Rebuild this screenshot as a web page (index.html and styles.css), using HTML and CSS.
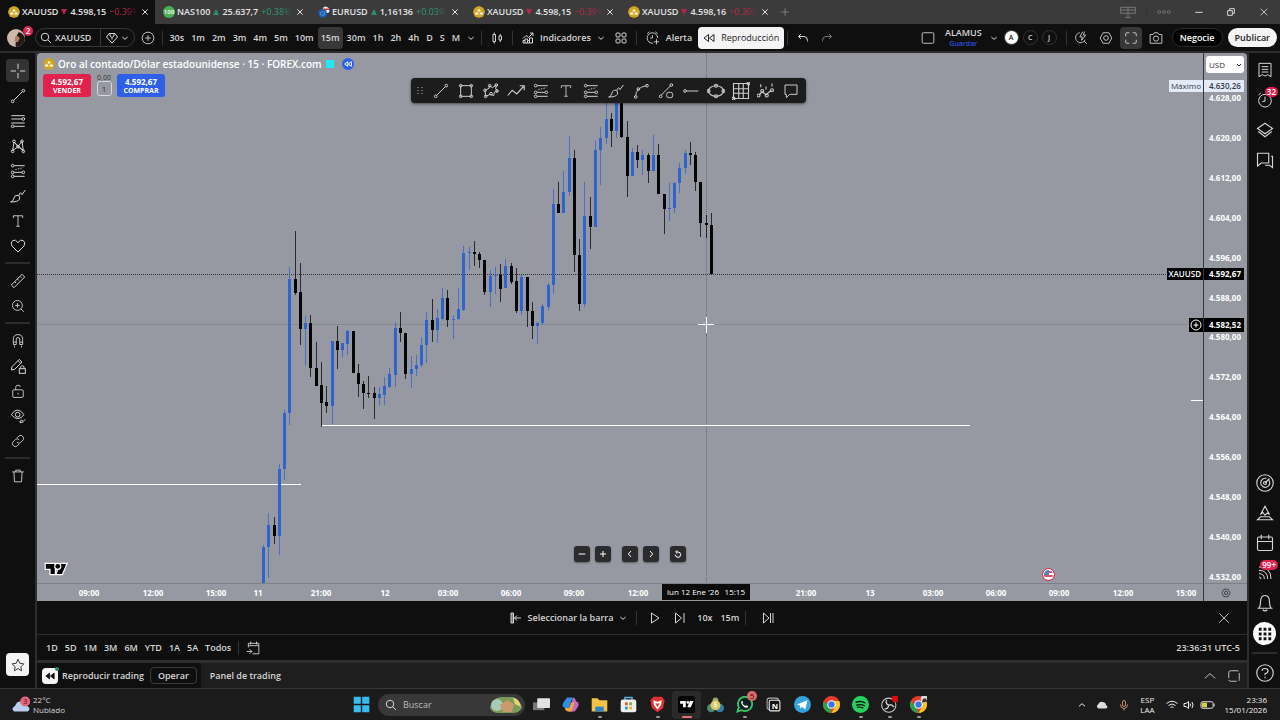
FILE: index.html
```html
<!DOCTYPE html>
<html lang="es">
<head>
    <meta charset="UTF-8">
    <meta name="viewport" content="width=device-width, initial-scale=1.0">
    <title>XAUUSD 4.598,15</title>
    <link rel="stylesheet" href="styles.css">
</head>
<body>
    <!-- BEGIN::icons -->
    <svg class="sprite" aria-hidden="true">
        <symbol id="i-gold" viewBox="0 0 24 24"><circle cx="12" cy="12" r="12" fill="#d2a520"/><path d="M9 11l1-4h4l1 4zM4 17l1-4h5l1 4zM13 17l1-4h5l1 4z" fill="#fff"/></symbol>
        <symbol id="i-close" viewBox="0 0 24 24"><path d="M4 4l16 16M20 4L4 20"/></symbol>
        <symbol id="i-down" viewBox="0 0 24 24"><path d="M4 9l8 7 8-7"/></symbol>
        <symbol id="i-up" viewBox="0 0 24 24"><path d="M3 16l9-8 9 8"/></symbol>
        <symbol id="i-plus" viewBox="0 0 24 24"><path d="M12 3v18M3 12h18"/></symbol>
        <symbol id="i-pluscircle" viewBox="0 0 24 24"><circle cx="12" cy="12" r="10"/><path d="M12 7v10M7 12h10"/></symbol>
        <symbol id="i-search" viewBox="0 0 24 24"><circle cx="10" cy="10" r="7.500"/><path d="M15.500 15.500L22 22"/></symbol>
        <symbol id="i-gem" viewBox="0 0 24 24"><path d="M6 3h12l5 7-11 12L1 10zM8 3v5l4 3 4-3V3M12 11v4"/></symbol>
        <symbol id="i-candles" viewBox="0 0 24 24"><path d="M4 5h5v14H4zM6.500 1v4M6.500 19v4M16 8h5v8h-5zM18.500 4v4M18.500 16v4"/></symbol>
        <symbol id="i-indicators" viewBox="0 0 24 24"><path d="M2 13l6-6 5 4 9-9M16 2h6v6M2 22v-5h4v-3h5v3h4v-5h6v10zM6 17v5M11 17v5M15 17v5"/></symbol>
        <symbol id="i-grid4" viewBox="0 0 24 24"><rect x="2" y="2" width="8" height="8" rx="2"/><rect x="14" y="2" width="8" height="8" rx="2"/><rect x="2" y="14" width="8" height="8" rx="2"/><rect x="14" y="14" width="8" height="8" rx="2"/></symbol>
        <symbol id="i-alarm" viewBox="0 0 24 24"><path d="M20 12a9 9 0 1 0-8 9M11 7v5H7M2 5l4-4M16 1l4 4M18 14v9M13.500 18.500h9"/></symbol>
        <symbol id="i-rewind" viewBox="0 0 24 24"><path d="M11 5v14l-9-7zM22 5v14l-9-7z"/></symbol>
        <symbol id="i-undo" viewBox="0 0 24 24"><path d="M8 4L3 9l5 5M3 9h11q7 0 7 8v2"/></symbol>
        <symbol id="i-redo" viewBox="0 0 24 24"><path d="M16 4l5 5-5 5M21 9H10q-7 0-7 8v2"/></symbol>
        <symbol id="i-rect" viewBox="0 0 24 24"><rect x="2" y="3" width="20" height="18" rx="2"/></symbol>
        <symbol id="i-quick" viewBox="0 0 24 24"><path d="M10 3a8.500 8.500 0 1 0 9 12M15 1l-5 9h4l-1 6 7-9h-4l2-6M17 17l5 5"/></symbol>
        <symbol id="i-hex" viewBox="0 0 24 24"><path d="M7 3h10l5 9-5 9H7l-5-9z"/><circle cx="12" cy="12" r="4"/></symbol>
        <symbol id="i-full" viewBox="0 0 24 24"><path d="M3 9V5q0-2 2-2h4M15 3h4q2 0 2 2v4M21 15v4q0 2-2 2h-4M9 21H5q-2 0-2-2v-4"/></symbol>
        <symbol id="i-camera" viewBox="0 0 24 24"><path d="M2 6h5l2-3h6l2 3h5v15H2z"/><circle cx="12" cy="13" r="4.500"/></symbol>
        <symbol id="i-cross" viewBox="0 0 24 24"><path d="M12 1v8M12 15v8M1 12h8M15 12h8M12 12h.1"/></symbol>
        <symbol id="i-line" viewBox="0 0 24 24"><circle cx="4" cy="20" r="2"/><circle cx="20" cy="4" r="2"/><path d="M5.500 18.500l13-13"/></symbol>
        <symbol id="i-fib" viewBox="0 0 24 24"><path d="M2 4h20M2 9h16M2 15h20M6 20h16"/><circle cx="20" cy="9" r="2"/><circle cx="4" cy="20" r="2"/></symbol>
        <symbol id="i-pattern" viewBox="0 0 24 24"><path d="M4 19L6 6l6 7 6-8 2 14-8-6zM6 6l14 13"/><circle cx="4" cy="20" r="2"/><circle cx="6" cy="5" r="2"/><circle cx="12" cy="13" r="2"/><circle cx="18" cy="5" r="2"/><circle cx="20" cy="20" r="2"/></symbol>
        <symbol id="i-position" viewBox="0 0 24 24"><path d="M6 4h16M6 14h12M6 20h16"/><path d="M8 10l12-3" stroke-dasharray="2 2"/><circle cx="4" cy="4" r="2"/><circle cx="4" cy="14" r="2"/><circle cx="20" cy="14" r="2"/><circle cx="4" cy="20" r="2"/></symbol>
        <symbol id="i-brush" viewBox="0 0 24 24"><path d="M1 21q4-1 5-6t6-4q4 2 2 6-2 4-13 4zM13 12q1-4 3-5l2 3 5-7"/></symbol>
        <symbol id="i-text" viewBox="0 0 24 24"><path d="M4 7V3h16v4M12 3v18M9 21h6"/></symbol>
        <symbol id="i-heart" viewBox="0 0 24 24"><path d="M12 21L3 12Q0 7 4 4t8 3q4-6 8-3t1 8z"/></symbol>
        <symbol id="i-ruler" viewBox="0 0 24 24"><path d="M2 18L18 2l4 4L6 22zM7 13l2 2M11 9l2 2M15 5l2 2"/></symbol>
        <symbol id="i-zoom" viewBox="0 0 24 24"><circle cx="11" cy="11" r="8.500"/><path d="M17 17l5 5M11 7v8M7 11h8"/></symbol>
        <symbol id="i-magnet" viewBox="0 0 24 24"><path d="M4 18V9q0-8 8-8t8 8v9h-5V9q0-3-3-3T9 9v9zM4 14h5M15 14h5M6 20v3M18 20v3"/></symbol>
        <symbol id="i-pencillock" viewBox="0 0 24 24"><path d="M2 18L3 13 14 2l4 4L7 17zM12 4l4 4"/><rect x="14" y="16" width="9" height="7"/><path d="M16 16v-3q2.500-3 5 0v3"/></symbol>
        <symbol id="i-lock" viewBox="0 0 24 24"><rect x="3" y="10" width="18" height="13" rx="2"/><path d="M8 10V6q0-4 4-4t4 3M12 15v3"/></symbol>
        <symbol id="i-eye" viewBox="0 0 24 24"><path d="M2 10q9-14 19 0-9 12-19 0z"/><circle cx="11.500" cy="10" r="3.500"/><path d="M14 21q2 0 3-3l3 2 3-3M15 22l5-1"/></symbol>
        <symbol id="i-link" viewBox="0 0 24 24"><path d="M10 7l4-4q3-2 6 1t1 6l-5 5q-3 2-6-1M14 17l-4 4q-3 2-6-1t-1-6l5-5q3-2 6 1"/></symbol>
        <symbol id="i-trash" viewBox="0 0 24 24"><path d="M2 5h20M8 5V2h8v3M5 5l1 17h12l1-17"/></symbol>
        <symbol id="i-star" viewBox="0 0 24 24"><path d="M12 2l3 7 7 1-5 5 1 7-6-4-6 4 1-7-5-5 7-1z"/></symbol>
        <symbol id="i-box" viewBox="0 0 24 24"><path d="M4 4h16v16H4z"/><circle cx="4" cy="4" r="2"/><circle cx="20" cy="4" r="2"/><circle cx="4" cy="20" r="2"/><circle cx="20" cy="20" r="2"/></symbol>
        <symbol id="i-poly" viewBox="0 0 24 24"><path d="M4 20l-1-9 6-3 1-4 4 3 6-4-1 6 3 3-5 2-1 5-5-2z"/><circle cx="4" cy="20" r="2"/><circle cx="3" cy="11" r="2"/><circle cx="10" cy="4" r="2"/><circle cx="20" cy="3" r="2"/><circle cx="21" cy="12" r="2"/><circle cx="12" cy="16" r="2"/></symbol>
        <symbol id="i-zigzag" viewBox="0 0 24 24"><path d="M1 18l6-7 6 5 9-10M17 5h6v6"/></symbol>
        <symbol id="i-curve" viewBox="0 0 24 24"><path d="M4 20Q4 7 20 4"/><circle cx="4" cy="21" r="2"/><circle cx="8" cy="9" r="2"/><circle cx="21" cy="4" r="2"/></symbol>
        <symbol id="i-lineshape" viewBox="0 0 24 24"><path d="M5 18L19 4"/><circle cx="4" cy="20" r="2"/><circle cx="20" cy="3" r="2"/><rect x="13" y="14" width="9" height="8" rx="3"/></symbol>
        <symbol id="i-hline" viewBox="0 0 24 24"><path d="M5 12h18"/><circle cx="3" cy="12" r="2"/></symbol>
        <symbol id="i-ellipse" viewBox="0 0 24 24"><ellipse cx="12" cy="12" rx="10" ry="7"/><circle cx="2" cy="12" r="2"/><circle cx="22" cy="12" r="2"/><circle cx="12" cy="5" r="2"/><circle cx="12" cy="19" r="2"/></symbol>
        <symbol id="i-table" viewBox="0 0 24 24"><path d="M2 2h20v20H2zM9 2v20M15 2v20M2 9h20M2 15h20"/><circle cx="22" cy="2" r="2"/><circle cx="2" cy="22" r="2"/></symbol>
        <symbol id="i-elliott" viewBox="0 0 24 24"><path d="M3 17l4-4 5 4 7-6M5 3v4M12 6v4M20 2v4"/><circle cx="2" cy="18" r="2"/><circle cx="7" cy="12" r="2"/><circle cx="13" cy="18" r="2"/><circle cx="20" cy="11" r="2"/></symbol>
        <symbol id="i-note" viewBox="0 0 24 24"><path d="M3 3h18v14H10l-5 5v-5H3z"/></symbol>
        <symbol id="i-watch" viewBox="0 0 24 24"><path d="M3 2h18v20l-5-3-4 2-4-2-5 3zM7 7h10M7 11h10M7 15h10"/></symbol>
        <symbol id="i-clock" viewBox="0 0 24 24"><circle cx="12" cy="13" r="9.500"/><path d="M12 7v7H8M2 5l4-4"/></symbol>
        <symbol id="i-layers" viewBox="0 0 24 24"><path d="M12 3l10 7-10 7-10-7zM3 14l9 7 9-7"/></symbol>
        <symbol id="i-chat" viewBox="0 0 24 24"><path d="M2 3h15v13H7l-5 4zM20 7h2v15l-4-3h-6"/></symbol>
        <symbol id="i-target" viewBox="0 0 24 24"><circle cx="12" cy="12" r="11"/><path d="M17 8a6 6 0 1 1-3-2M12 12l6-6"/><circle cx="12" cy="12" r="2"/></symbol>
        <symbol id="i-pyramid" viewBox="0 0 24 24"><path d="M6 14l6-11 6 11-3-2-3 3-3-4zM2 21l4-4h12l4 4z"/></symbol>
        <symbol id="i-calendar" viewBox="0 0 24 24"><rect x="2" y="4" width="20" height="18" rx="2"/><path d="M2 10h20M7 1v6M17 1v6"/></symbol>
        <symbol id="i-feed" viewBox="0 0 24 24"><path d="M3 13q8 0 8 8M3 8q13 0 13 13M3 3q18 0 18 18M3 18q3 0 3 3"/></symbol>
        <symbol id="i-bell" viewBox="0 0 24 24"><path d="M2 19h20M4 19q2-3 2-8 0-9 6-9t6 9q0 5 2 8M9 21q3 3 6 0"/></symbol>
        <symbol id="i-help" viewBox="0 0 24 24"><circle cx="12" cy="12" r="11"/><path d="M8 9q0-3 4-3t4 3-4 4v2M12 17v2"/></symbol>
        <symbol id="i-goto" viewBox="0 0 24 24"><path d="M4 11V4h18v18H11M4 8h18M8 1v5M18 1v5M1 18h9M6 14l4 4-4 4"/></symbol>
        <symbol id="i-selectbar" viewBox="0 0 24 24"><path d="M2 2h5v20H2z" fill="#777"/><path d="M22 12H9M14 7l-5 5 5 5"/></symbol>
        <symbol id="i-play" viewBox="0 0 24 24"><path d="M5 2l15 10L5 22z"/></symbol>
        <symbol id="i-step" viewBox="0 0 24 24"><path d="M3 2l12 10L3 22zM20 2v20"/></symbol>
        <symbol id="i-toend" viewBox="0 0 24 24"><path d="M3 2l11 10L3 22zM17 2v20M22 2v20"/></symbol>
        <symbol id="i-chrome" viewBox="0 0 24 24"><circle cx="12" cy="12" r="12" fill="#e33b2e"/><path d="M1 7l8 8 3 9A12 12 0 0 1 1 7z" fill="#2ba24c"/><path d="M12 7h11a12 12 0 0 1-11 17l5-9z" fill="#fcc31e"/><circle cx="12" cy="12" r="6" fill="#fff"/><circle cx="12" cy="12" r="4.500" fill="#3a76e8"/></symbol>
    </svg>
    <!-- END::icons -->

    <!-- BEGIN::tabs -->
    <header class="tabs">
        <div class="tab active">
            <svg class="coin"><use href="#i-gold"/></svg><b>XAUUSD</b><i class="fall"></i><span>4.598,15</span><span class="pct red">−0.39%</span>
            <button class="icon-btn" aria-label="Cerrar"><svg class="ico s8"><use href="#i-close"/></svg></button>
        </div>
        <div class="tab">
            <span class="coin nas">100</span><b>NAS100</b><i class="rise"></i><span>25.637,7</span><span class="pct green">+0.38%</span>
            <button class="icon-btn" aria-label="Cerrar"><svg class="ico s8"><use href="#i-close"/></svg></button>
        </div>
        <div class="tab">
            <svg class="coin" viewBox="0 0 24 24"><rect x="10" y="1" width="13" height="13" rx="5" fill="#eee"/><path d="M11 5h12v3H11z" fill="#d33"/><circle cx="9" cy="15" r="9" fill="#1d5fae"/><circle cx="9" cy="15" r="4" fill="none" stroke="#8cc8e8" stroke-width="2" stroke-dasharray="2 2"/></svg><b>EURUSD</b><i class="rise"></i><span>1,16136</span><span class="pct green">+0.03%</span>
            <button class="icon-btn" aria-label="Cerrar"><svg class="ico s8"><use href="#i-close"/></svg></button>
        </div>
        <div class="tab">
            <svg class="coin"><use href="#i-gold"/></svg><b>XAUUSD</b><i class="fall"></i><span>4.598,15</span><span class="pct red">−0.39%</span>
            <button class="icon-btn" aria-label="Cerrar"><svg class="ico s8"><use href="#i-close"/></svg></button>
        </div>
        <div class="tab">
            <svg class="coin"><use href="#i-gold"/></svg><b>XAUUSD</b><i class="fall"></i><span>4.598,16</span><span class="pct red">−0.39%</span>
            <button class="icon-btn" aria-label="Cerrar"><svg class="ico s8"><use href="#i-close"/></svg></button>
        </div>
        <button class="icon-btn new-tab" aria-label="Nueva pestaña"><svg class="ico s10"><use href="#i-plus"/></svg></button>
        <div class="window-buttons">
            <button class="icon-btn dim" aria-label="Diseño"><svg class="ico s16" viewBox="0 0 24 24"><path d="M1 5h22v9H1zM12 5v15M8 20h8M1 9h22"/></svg></button>
            <span class="sep"></span>
            <button class="icon-btn dim" aria-label="Más"><svg class="ico s14" viewBox="0 0 24 24"><circle cx="4" cy="12" r="2.500"/><circle cx="12" cy="12" r="2.500"/><circle cx="20" cy="12" r="2.500"/></svg></button>
            <button class="icon-btn" aria-label="Minimizar"><svg class="ico s8" viewBox="0 0 24 24"><path d="M1 13h22"/></svg></button>
            <button class="icon-btn" aria-label="Restaurar"><svg class="ico s8" viewBox="0 0 24 24"><path d="M2 8h14v14H2zM8 8V2h14v14h-6"/></svg></button>
            <button class="icon-btn" aria-label="Cerrar ventana"><svg class="ico s10"><use href="#i-close"/></svg></button>
        </div>
    </header>
    <!-- END::tabs -->

    <!-- BEGIN::toolbar -->
    <nav class="toolbar">
        <button class="avatar" aria-label="Perfil">
            <svg viewBox="0 0 24 24"><circle cx="12" cy="12" r="12" fill="#cbb9aa"/><path d="M12 24q-2-6 2-10-3-5 2-10 6 2 8 8-1 11-12 12z" fill="#241b18"/><path d="M11 10q5-2 6 3l-3 5-4-2z" fill="#b17f62"/></svg>
            <span class="badge">2</span>
        </button>
        <div class="search">
            <button><svg class="ico s12"><use href="#i-search"/></svg><b>XAUUSD</b></button>
            <button aria-label="Favoritos"><svg class="ico s12"><use href="#i-gem"/></svg><svg class="ico s8"><use href="#i-down"/></svg></button>
        </div>
        <button class="icon-btn" aria-label="Comparar"><svg class="ico s14"><use href="#i-pluscircle"/></svg></button>
        <span class="sep"></span>
        <div class="intervals">
            <button>30s</button><button>1m</button><button>2m</button><button>3m</button><button>4m</button><button>5m</button><button>10m</button><button class="selected">15m</button><button>30m</button><button>1h</button><button>2h</button><button>4h</button><button>D</button><button>S</button><button>M</button>
            <button aria-label="Intervalos"><svg class="ico s8"><use href="#i-down"/></svg></button>
        </div>
        <span class="sep"></span>
        <button class="tool-btn" aria-label="Velas"><svg class="ico s12"><use href="#i-candles"/></svg></button>
        <span class="sep"></span>
        <button class="tool-btn"><svg class="ico s12"><use href="#i-indicators"/></svg>Indicadores</button>
        <button class="icon-btn" aria-label="Favoritos de indicadores"><svg class="ico s8"><use href="#i-down"/></svg></button>
        <button class="tool-btn" aria-label="Plantillas"><svg class="ico s12"><use href="#i-grid4"/></svg></button>
        <span class="sep"></span>
        <button class="tool-btn"><svg class="ico s14"><use href="#i-alarm"/></svg>Alerta</button>
        <button class="replay-btn"><svg class="ico s12"><use href="#i-rewind"/></svg>Reproducción</button>
        <span class="sep"></span>
        <button class="tool-btn" aria-label="Deshacer"><svg class="ico s12"><use href="#i-undo"/></svg></button>
        <button class="tool-btn dim" aria-label="Rehacer"><svg class="ico s12"><use href="#i-redo"/></svg></button>
        <div class="toolbar-right">
            <svg class="ico s14"><use href="#i-rect"/></svg>
            <div class="layout-name"><button>ALAMUS</button><a href="#">Guardar</a></div>
            <button class="icon-btn" aria-label="Diseños"><svg class="ico s8"><use href="#i-down"/></svg></button>
            <div class="letters"><button class="on">A</button><button>C</button><button>J</button></div>
            <span class="sep"></span>
            <button class="tool-ico" aria-label="Búsqueda rápida"><svg class="ico s14"><use href="#i-quick"/></svg></button>
            <button class="tool-ico" aria-label="Ajustes"><svg class="ico s14"><use href="#i-hex"/></svg></button>
            <button class="tool-ico selected" aria-label="Pantalla completa"><svg class="ico s14"><use href="#i-full"/></svg></button>
            <button class="tool-ico" aria-label="Instantánea"><svg class="ico s14"><use href="#i-camera"/></svg></button>
            <button class="pill dark">Negocie</button>
            <button class="pill">Publicar</button>
        </div>
    </nav>
    <!-- END::toolbar -->

    <main class="workspace">
        <!-- BEGIN::left-rail -->
        <aside class="left-rail">
            <button class="selected" aria-label="Cruz"><svg class="ico s16"><use href="#i-cross"/></svg></button>
            <button aria-label="Línea"><svg class="ico s16"><use href="#i-line"/></svg></button>
            <button aria-label="Fibonacci"><svg class="ico s16"><use href="#i-fib"/></svg></button>
            <button aria-label="Patrones"><svg class="ico s16"><use href="#i-pattern"/></svg></button>
            <button aria-label="Posición"><svg class="ico s16"><use href="#i-position"/></svg></button>
            <button aria-label="Pincel"><svg class="ico s16"><use href="#i-brush"/></svg></button>
            <button aria-label="Texto"><svg class="ico s14"><use href="#i-text"/></svg></button>
            <button aria-label="Favoritos"><svg class="ico s16"><use href="#i-heart"/></svg></button>
            <hr>
            <button aria-label="Medir"><svg class="ico s16"><use href="#i-ruler"/></svg></button>
            <button aria-label="Acercar"><svg class="ico s14"><use href="#i-zoom"/></svg></button>
            <hr>
            <button aria-label="Imán"><svg class="ico s14"><use href="#i-magnet"/></svg></button>
            <button aria-label="Modo dibujo"><svg class="ico s16"><use href="#i-pencillock"/></svg></button>
            <button aria-label="Bloquear"><svg class="ico s14"><use href="#i-lock"/></svg></button>
            <button aria-label="Ocultar"><svg class="ico s16"><use href="#i-eye"/></svg></button>
            <button aria-label="Vincular"><svg class="ico s14"><use href="#i-link"/></svg></button>
            <hr>
            <button aria-label="Eliminar"><svg class="ico s14"><use href="#i-trash"/></svg></button>
            <button class="star" aria-label="Barra de favoritos"><svg class="ico s14"><use href="#i-star"/></svg></button>
        </aside>
        <!-- END::left-rail -->

        <section class="center">
            <!-- BEGIN::chart -->
            <div class="chart">
                <div class="plot">
                    <svg id="candles" class="canvas" role="img" aria-label="XAUUSD 15 minutos"></svg>
                    <div class="legend">
                        <h1><svg class="coin"><use href="#i-gold"/></svg>Oro al contado/Dólar estadounidense · 15 · FOREX.com<i class="flag"></i><span class="back"><svg class="ico s8"><use href="#i-rewind"/></svg></span></h1>
                        <div class="orders">
                            <button class="sell">4.592,67<span>VENDER</span></button>
                            <div class="spread"><small>0,00</small><button>1</button></div>
                            <button class="buy">4.592,67<span>COMPRAR</span></button>
                        </div>
                    </div>
                    <div class="draw-bar">
                        <span class="grip"></span>
                        <button aria-label="Línea"><svg class="ico s16"><use href="#i-line"/></svg></button>
                        <button aria-label="Rectángulo"><svg class="ico s16"><use href="#i-box"/></svg></button>
                        <button aria-label="Trazado"><svg class="ico s16"><use href="#i-poly"/></svg></button>
                        <button aria-label="Flecha"><svg class="ico s18"><use href="#i-zigzag"/></svg></button>
                        <button aria-label="Posición larga"><svg class="ico s16"><use href="#i-position"/></svg></button>
                        <button aria-label="Texto"><svg class="ico s14"><use href="#i-text"/></svg></button>
                        <button aria-label="Posición corta"><svg class="ico s16"><use href="#i-position"/></svg></button>
                        <button aria-label="Pincel"><svg class="ico s16"><use href="#i-brush"/></svg></button>
                        <button aria-label="Curva"><svg class="ico s16"><use href="#i-curve"/></svg></button>
                        <button aria-label="Información"><svg class="ico s16"><use href="#i-lineshape"/></svg></button>
                        <button aria-label="Rayo horizontal"><svg class="ico s16"><use href="#i-hline"/></svg></button>
                        <button aria-label="Elipse"><svg class="ico s18"><use href="#i-ellipse"/></svg></button>
                        <button aria-label="Tabla"><svg class="ico s18"><use href="#i-table"/></svg></button>
                        <button aria-label="Ondas"><svg class="ico s18"><use href="#i-elliott"/></svg></button>
                        <button aria-label="Comentario"><svg class="ico s16"><use href="#i-note"/></svg></button>
                    </div>
                    <svg class="tv-logo" viewBox="-2 -2 40 23"><path d="M1 1h15v17H9V9H1zM26 1h9l-7 17h-9z"/><circle cx="21" cy="5" r="4"/></svg>
                    <div class="nav-bar">
                        <button aria-label="Alejar"><svg class="ico s8" viewBox="0 0 24 24"><path d="M2 12h20"/></svg></button>
                        <button aria-label="Acercar"><svg class="ico s8"><use href="#i-plus"/></svg></button>
                        <button class="apart" aria-label="Izquierda"><svg class="ico s8" viewBox="0 0 24 24"><path d="M15 3l-8 9 8 9"/></svg></button>
                        <button aria-label="Derecha"><svg class="ico s8" viewBox="0 0 24 24"><path d="M9 3l8 9-8 9"/></svg></button>
                        <button class="apart" aria-label="Restablecer"><svg class="ico s8" viewBox="0 0 24 24"><path d="M6 6h6a8 8 0 1 1-8 8M10 1L5 6l5 5"/></svg></button>
                    </div>
                    <span class="event" aria-label="Evento EE. UU."></span>
                    <span class="tag max">Máximo</span>
                    <span class="tag last">XAUUSD</span>
                    <span class="tag cursor"><svg class="ico s12"><use href="#i-pluscircle"/></svg></span>
                </div>
                <div class="price-axis">
                    <select class="currency" aria-label="Divisa"><option>USD</option></select>
                    <span>4.628,00</span><span>4.620,00</span><span>4.612,00</span><span>4.604,00</span><span>4.596,00</span><span>4.588,00</span><span>4.580,00</span><span>4.572,00</span><span>4.564,00</span><span>4.556,00</span><span>4.548,00</span><span>4.540,00</span><span>4.532,00</span>
                    <span class="tag max">4.630,26</span>
                    <span class="tag last">4.592,67</span>
                    <span class="tag cursor">4.582,52</span>
                </div>
                <div class="time-axis">
                    <svg id="times" class="canvas"></svg>
                    <span class="time-tag"><span>lun 12 Ene '26</span><span>15:15</span></span>
                </div>
                <button class="axis-settings" aria-label="Ajustes de escala"><svg class="ico s10"><use href="#i-hex"/></svg></button>
            </div>
            <!-- END::chart -->
            <!-- BEGIN::replay-bar -->
            <div class="replay-bar">
                <div class="replay-controls">
                    <button class="tool-btn"><svg class="ico s12"><use href="#i-selectbar"/></svg>Seleccionar la barra</button>
                    <button class="icon-btn" aria-label="Opciones"><svg class="ico s8"><use href="#i-down"/></svg></button>
                    <span class="sep"></span>
                    <button class="step-btn" aria-label="Reproducir"><svg class="ico s12"><use href="#i-play"/></svg></button>
                    <button class="step-btn" aria-label="Avanzar"><svg class="ico s12"><use href="#i-step"/></svg></button>
                    <button class="step-btn">10x</button>
                    <button class="step-btn">15m</button>
                    <span class="sep"></span>
                    <button class="step-btn end" aria-label="Tiempo real"><svg class="ico s12"><use href="#i-toend"/></svg></button>
                </div>
                <button class="icon-btn close" aria-label="Cerrar reproducción"><svg class="ico s14"><use href="#i-close"/></svg></button>
            </div>
            <!-- END::replay-bar -->
            <div class="range-bar">
                <button>1D</button><button>5D</button><button>1M</button><button>3M</button><button>6M</button><button>YTD</button><button>1A</button><button>5A</button><button>Todos</button>
                <span class="sep"></span>
                <button aria-label="Ir a"><svg class="ico s14"><use href="#i-goto"/></svg></button>
                <time>23:36:31 UTC-5</time>
            </div>
            <div class="panel-bar">
                <div class="panel-tab">
                    <span class="replay-logo"><svg class="ico s10"><use href="#i-rewind"/></svg></span>
                    Reproducir trading
                    <button>Operar</button>
                </div>
                <button class="panel-link">Panel de trading</button>
                <button class="icon-btn" aria-label="Expandir"><svg class="ico s14"><use href="#i-up"/></svg></button>
                <button class="icon-btn" aria-label="Maximizar"><svg class="ico s14" viewBox="0 0 24 24"><rect x="3" y="3" width="18" height="18" rx="3" stroke-dasharray="14 3"/></svg></button>
            </div>
        </section>

        <!-- BEGIN::right-rail -->
        <aside class="right-rail">
            <button aria-label="Lista"><svg class="ico s16"><use href="#i-watch"/></svg></button>
            <button aria-label="Alertas"><svg class="ico s16"><use href="#i-clock"/></svg><span class="badge">32</span></button>
            <button aria-label="Capas"><svg class="ico s18"><use href="#i-layers"/></svg></button>
            <button aria-label="Chats"><svg class="ico s18"><use href="#i-chat"/></svg></button>
            <button class="lower" aria-label="Filtros"><svg class="ico s18"><use href="#i-target"/></svg></button>
            <button aria-label="Pine"><svg class="ico s18"><use href="#i-pyramid"/></svg></button>
            <button aria-label="Calendario"><svg class="ico s18"><use href="#i-calendar"/></svg></button>
            <button aria-label="Noticias"><svg class="ico s16"><use href="#i-feed"/></svg><span class="badge">99+</span></button>
            <button aria-label="Notificaciones"><svg class="ico s18"><use href="#i-bell"/></svg></button>
            <button aria-label="Productos"><svg class="apps" viewBox="0 0 24 24"><circle cx="12" cy="12" r="12"/><path d="M6 6h3v3H6zM11 6h3v3h-3zM16 6h3v3h-3zM6 11h3v3H6zM11 11h3v3h-3zM16 11h3v3h-3zM6 16h3v3H6zM11 16h3v3h-3zM16 16h3v3h-3z"/></svg></button>
            <hr>
            <button aria-label="Ayuda"><svg class="ico s18"><use href="#i-help"/></svg></button>
        </aside>
        <!-- END::right-rail -->
    </main>

    <!-- BEGIN::taskbar -->
    <footer class="taskbar">
        <div class="weather">
            <svg viewBox="0 0 24 20"><path d="M4 19q-5-3 1-7 2-6 8-5 5 1 6 5 6 3 1 7z" fill="#b9cdf0"/><circle cx="17" cy="7" r="6" fill="#e5677c"/><text x="17" y="10" font-size="9" text-anchor="middle" fill="#3a1119">3</text></svg>
            <p>22°C<br>Nublado</p>
        </div>
        <div class="apps-row">
            <button class="app" aria-label="Inicio"><svg viewBox="0 0 24 24"><path d="M1 1h10v10H1zM13 1h10v10H13zM1 13h10v10H1zM13 13h10v10H13z" fill="#35bdf0"/></svg></button>
            <label class="task-search"><svg class="ico s12"><use href="#i-search"/></svg><input type="text" placeholder="Buscar"><svg class="rocks" viewBox="0 0 34 17"><path d="M1 12q2-10 11-11h12q8 4 9 11-3 5-9 5H10q-7 0-9-5z" fill="#7d9b58"/><circle cx="8" cy="9" r="6" fill="#a8cbb6"/><path d="M11 9l7-5 7 4-2 8h-9z" fill="#c79b6a"/><path d="M24 2q6 0 8 9l-6-3z" fill="#e3d27c"/></svg></label>
            <button class="app" aria-label="Vista de tareas"><svg viewBox="0 0 24 24"><rect x="0" y="9" width="16" height="11" fill="#777"/><rect x="6" y="3" width="18" height="14" rx="1" fill="#e2e2e2"/></svg></button>
            <button class="app" aria-label="Copilot"><svg viewBox="0 0 24 24"><path d="M7 2h8l-5 15H4q-5-2-2-8z" fill="#2f8de4"/><path d="M15 2q4 0 5 6h2q3 3 0 8l-4 6H9l5-13z" fill="#c566c9"/><path d="M4 17h6l3-8 5-1-4 14H9q-4 0-5-5z" fill="#f1a33c"/></svg></button>
            <button class="app open" aria-label="Explorador"><svg viewBox="0 0 24 24"><path d="M1 3h8l3 3h11v16H1z" fill="#f3c443"/><path d="M6 15h12v7H6z" fill="#2f83c9"/></svg></button>
            <button class="app" aria-label="Tienda"><svg viewBox="0 0 24 24"><path d="M7 6V2h10v4" fill="none" stroke="#55b4e8" stroke-width="2"/><rect x="1" y="5" width="22" height="18" rx="3" fill="#eee"/><path d="M7 9h4v4H7z" fill="#e8542c"/><path d="M13 9h4v4h-4z" fill="#75b82b"/><path d="M7 15h4v4H7z" fill="#2aa0da"/><path d="M13 15h4v4h-4z" fill="#f3b51b"/></svg></button>
            <button class="app open" aria-label="Brave"><svg viewBox="0 0 24 24"><path d="M6 1h12l4 5-2 11-8 6-8-6L2 6z" fill="#dd3230"/><path d="M6 6l6 2 6-2-1 7-5 6-5-6zM9 11h6" fill="#fff"/><path d="M9 10l3 1 3-1-3 6z" fill="#dd3230"/></svg></button>
            <button class="app current" aria-label="TradingView"><svg viewBox="0 0 24 24"><rect width="24" height="24" rx="4" fill="#050505"/><path d="M3 7h8v9H7v-5H3zM17 7h5l-4 9h-5z" fill="#fff"/><circle cx="14" cy="9" r="2" fill="#fff"/></svg></button>
            <button class="app" aria-label="Dinero"><svg viewBox="0 0 24 24"><circle cx="6" cy="17" r="6" fill="#4b8a76"/><circle cx="18" cy="17" r="6" fill="#347fa8"/><circle cx="12" cy="6" r="4" fill="#94a960"/><circle cx="12" cy="13" r="7" fill="#d9c65d"/><text x="12" y="17" font-size="11" text-anchor="middle" fill="#fff">$</text></svg></button>
            <button class="app open" aria-label="WhatsApp"><svg viewBox="0 0 24 24"><path d="M2 22l2-6a10 10 0 1 1 4 4z" fill="#122" stroke="#35c765" stroke-width="2.500"/><path d="M8 7q-2 3 2 7t7 2v-2l-3-1-1 1q-3-1-4-4l1-1-1-2z" fill="#fff"/></svg><span class="badge">5</span></button>
            <button class="app" aria-label="Notion"><svg viewBox="0 0 24 24"><rect x="3" y="3" width="16" height="16" rx="3" fill="none" stroke="#aaa" stroke-width="1.500"/><rect x="6" y="6" width="15" height="15" rx="2" fill="#151515" stroke="#eee" stroke-width="1.500"/><text x="14" y="18" font-size="11" font-weight="700" text-anchor="middle" fill="#fff">N</text></svg></button>
            <button class="app" aria-label="Telegram"><svg viewBox="0 0 24 24"><circle cx="12" cy="12" r="12" fill="#34a3df"/><path d="M4 12l15-6-3 13-5-4-2 3-1-5z" fill="#fff"/></svg></button>
            <button class="app" aria-label="Chrome"><svg><use href="#i-chrome"/></svg></button>
            <button class="app open" aria-label="Spotify"><svg viewBox="0 0 24 24"><circle cx="12" cy="12" r="12" fill="#25d260"/><path d="M5 9q8-3 14 1M6 13q7-2 12 1M7 16q5-1 9 1" fill="none" stroke="#111" stroke-width="2"/></svg></button>
            <button class="app open" aria-label="OBS"><svg viewBox="0 0 24 24"><circle cx="11" cy="13" r="10" fill="#181818" stroke="#ccc" stroke-width="1.500"/><path d="M11 13q-5-2-3-7M11 13q5-2 7 3M11 13q-1 6-6 5" fill="none" stroke="#ccc" stroke-width="2"/><circle cx="20" cy="4" r="5" fill="#d90d0d"/></svg></button>
            <button class="app open" aria-label="Chrome, perfil"><svg viewBox="0 0 24 24"><use href="#i-chrome" width="24" height="24"/><circle cx="20" cy="4" r="5" fill="#ddd"/><path d="M17 9q0-6 5-6l3 5z" fill="#3b3330"/></svg></button>
        </div>
        <div class="tray">
            <svg class="ico s8"><use href="#i-up"/></svg>
            <svg class="tray-ico cloud" viewBox="0 0 24 24"><path d="M5 19q-6-3-1-8 3-7 9-5 6 0 7 6 6 4 0 7z" fill="#ddd"/></svg>
            <svg class="tray-ico mic" viewBox="0 0 24 24"><rect x="9" y="3" width="6" height="12" rx="3"/><path d="M5 11q0 8 7 8t7-8M12 19v4"/></svg>
            <p class="lang">ESP<br>LAA</p>
            <svg class="tray-ico line" viewBox="0 0 24 24"><path d="M1 9q11-9 22 0M5 13q7-6 14 0M9 17q3-3 6 0"/></svg>
            <svg class="tray-ico line" viewBox="0 0 24 24"><path d="M2 9h4l5-4v14l-5-4H2zM14 9q2 3 0 6M18 6q4 6 0 12"/></svg>
            <svg class="tray-ico wide" viewBox="0 0 32 18"><rect x="2" y="2" width="26" height="14" rx="4" fill="none" stroke="#eee" stroke-width="2"/><path d="M4 4h11v10H4z" fill="#d8cf4f"/><path d="M30 6v6" stroke="#eee" stroke-width="2"/></svg>
            <p class="clock">23:36<br>15/01/2026</p>
        </div>
    </footer>
    <!-- END::taskbar -->

    <script src="chart.js"></script>
</body>
</html>
```
FILE: chart.js
```js
(function(){
    var NS = 'http://www.w3.org/2000/svg';
    var FIRST_X = 226;
    var STEP = 5.27;

    // u = up, d = down: body top, body bottom, wick top, wick bottom
    var bars = [
        'u 494 530 492 530', 'u 472 494 460 525', 'd 472 483 464 491', 'u 416 483 411 502', 'u 360 416 357 427',
        'u 226 360 214 372', 'd 226 240 178 242', 'd 239 276 210 292', 'u 270 276 263 313', 'd 270 315 262 324',
        'd 315 333 289 333', 'd 332 350 309 374', 'd 349 353 333 360', 'u 288 353 288 371', 'd 288 297 273 316',
        'u 290 297 290 305', 'u 278 291 277 302', 'd 278 320 278 320', 'd 320 331 311 344', 'd 331 340 328 356',
        'd 340 341 323 345', 'd 340 345 334 366', 'u 341 345 334 353', 'u 333 342 324 352', 'u 321 334 315 335',
        'u 275 322 269 334', 'd 275 280 259 289', 'd 280 321 280 326', 'u 316 321 303 335', 'u 312 316 302 323',
        'u 292 312 284 314', 'u 267 292 259 310', 'd 267 277 246 289', 'u 265 277 256 290', 'u 245 266 235 267',
        'd 245 267 237 274', 'u 266 267 262 286', 'u 256 266 235 267', 'u 200 257 193 258', 'u 199 200 194 217',
        'd 199 201 188 213', 'd 201 207 199 215', 'd 207 239 207 242', 'u 223 239 217 254', 'u 222 223 214 241',
        'd 222 236 211 249', 'u 213 235 206 235', 'd 213 229 210 231', 'd 228 258 215 260', 'u 224 258 222 262',
        'd 224 258 224 274', 'd 258 273 249 286', 'u 270 273 269 291', 'u 253 270 251 272', 'u 232 254 230 257',
        'u 151 232 136 241', 'd 151 160 129 160', 'u 139 160 118 160', 'u 105 139 83 143', 'd 105 202 97 219',
        'd 202 251 186 258', 'u 163 251 129 254', 'd 163 174 144 196', 'u 97 174 88 174', 'u 85 97 74 132',
        'u 66 85 50 91', 'd 66 78 60 94', 'u 47 78 47 85', 'd 47 84 47 85', 'd 84 123 68 144',
        'u 99 123 95 123', 'd 99 107 92 115', 'u 102 107 97 122', 'd 102 118 100 130', 'u 102 118 82 118',
        'd 102 141 91 141', 'd 141 156 141 181', 'u 155 156 130 168', 'u 130 155 129 160', 'u 115 130 110 140',
        'u 100 115 97 121', 'd 100 102 89 112', 'd 102 129 99 138', 'd 129 170 129 184', 'd 170 172 162 185',
        'd 172 221 160 221'
    ];

    // labels under the cursor tag are left out
    var times = [
        [52, '09:00'], [116, '12:00'], [179, '15:00'], [221, '11'], [284, '21:00'], [348, '12'], [411, '03:00'],
        [474, '06:00'], [537, '09:00'], [601, '12:00'], [769, '21:00'], [833, '13'],
        [896, '03:00'], [959, '06:00'], [1022, '09:00'], [1086, '12:00'], [1149, '15:00']
    ];

    function add(parent, name, attrs){
        var el = document.createElementNS(NS, name);
        for(var key in attrs){
            el.setAttribute(key, attrs[key]);
        }
        parent.appendChild(el);
        return el;
    }

    var chart = document.getElementById('candles');

    // price and crosshair lines
    add(chart, 'line', {x1: 0, x2: '100%', y1: 221.5, y2: 221.5, class: 'last-line'});
    add(chart, 'line', {x1: 0, x2: '100%', y1: 271.5, y2: 271.5, class: 'cross-h'});
    add(chart, 'line', {x1: 669.5, x2: 669.5, y1: 0, y2: '100%', class: 'cross-v'});

    // horizontal levels
    add(chart, 'line', {x1: 0, x2: 264, y1: 431.5, y2: 431.5, class: 'level'});
    add(chart, 'line', {x1: 284, x2: 933, y1: 372.5, y2: 372.5, class: 'level'});
    add(chart, 'line', {x1: 1154, x2: 1166, y1: 347.5, y2: 347.5, class: 'level'});

    bars.forEach(function(bar, i){
        var b = bar.split(' ');
        var x = Math.round(FIRST_X + i * STEP);
        var kind = b[0] === 'u' ? 'up' : 'down';
        add(chart, 'rect', {x: x, y: b[3], width: 1, height: b[4] - b[3], class: kind + ' wick'});
        add(chart, 'rect', {x: x - 1, y: b[1], width: 3, height: b[2] - b[1], class: kind});
    });

    // cursor
    add(chart, 'path', {d: 'M661 271.5h16M669.5 264v16', class: 'cursor-mark'});

    var axis = document.getElementById('times');
    times.forEach(function(t){
        add(axis, 'text', {x: t[0], y: 12}).textContent = t[1];
    });
})();
```
FILE: styles.css
```css
:root{
    --bg: #0f0f0f;
    --line: #2e2e2e;
    --text: #d6d6d6;
    --chart: #9699a2;
    --red: #e0224c;
    --blue: #2d5fe8;
}

*{
    margin: 0;
    padding: 0;
    box-sizing: border-box;
}

body{
    display: flex;
    flex-direction: column;
    height: 100vh;
    overflow: hidden;
    background: var(--line);
    color: var(--text);
    font: 600 9px/12px "Open Sans", "Noto Sans", sans-serif;
}

button{
    display: flex;
    align-items: center;
    justify-content: center;
    border: 0;
    background: none;
    color: inherit;
    font: inherit;
    white-space: nowrap;
    flex: none;
}

a{
    color: #2a4fe0;
    text-decoration: none;
}

b{
    font-weight: 600;
}

svg{
    display: block;
    flex: none;
}

.sprite{
    position: absolute;
    width: 0;
    height: 0;
}

.ico{
    fill: none;
    stroke: currentColor;
    stroke-width: 1.5;
}

.s8{ width: 8px; height: 8px; stroke-width: 3; }
.s10{ width: 10px; height: 10px; stroke-width: 2; }
.s12{ width: 12px; height: 12px; stroke-width: 2; }
.s14{ width: 14px; height: 14px; }
.s16{ width: 16px; height: 16px; }
.s18{ width: 18px; height: 18px; }

.dim{ color: #777; }

.sep{
    width: 1px;
    height: 14px;
    background: #333;
    flex: none;
}

.badge{
    position: absolute;
    top: 0;
    right: 0;
    min-width: 10px;
    padding: 0 2px;
    border-radius: 6px;
    background: var(--red);
    color: #fff;
    font-size: 8px;
    line-height: 10px;
    text-align: center;
}

.coin{
    width: 12px;
    height: 12px;
    border-radius: 6px;
    flex: none;
}

/* tabs */
.tabs{
    display: flex;
    height: 24px;
    background: #3b3b3b;
    flex: none;
}

.tab{
    display: flex;
    align-items: center;
    gap: 3px;
    width: 155px;
    padding: 0 6px 0 8px;
    color: #e4e4e4;
    flex: none;
}

.tab.active{
    background: var(--bg);
}

.tab b{
    margin-left: -1px;
}

.tab .icon-btn{
    margin-left: auto;
}

.nas{
    background: #4caf50;
    color: #fff;
    font-size: 6px;
    text-align: center;
}

.fall, .rise{
    border: 3px solid transparent;
    border-top: 6px solid #b8244c;
    border-bottom: 0;
}

.rise{
    border-top: 0;
    border-bottom: 6px solid #2d8f6f;
}

.pct{
    flex: 1;
    min-width: 0;
    overflow: hidden;
    font-weight: 400;
    white-space: nowrap;
    -webkit-mask-image: linear-gradient(90deg, #000 60%, transparent);
    mask-image: linear-gradient(90deg, #000 60%, transparent);
}

.red{ color: #c02850; }
.green{ color: #2d9f78; }

.new-tab{
    width: 20px;
    color: #888;
}

.window-buttons{
    display: flex;
    align-items: center;
    gap: 10px;
    margin-left: auto;
    padding-right: 11px;
}

.window-buttons .icon-btn + .icon-btn{
    margin-left: 14px;
}

/* toolbar */
.toolbar{
    display: flex;
    align-items: center;
    height: 27px;
    background: var(--bg);
    flex: none;
}

.avatar{
    position: relative;
    width: 26px;
    height: 24px;
    margin-left: 7px;
    justify-content: flex-start;
}

.avatar svg{
    width: 18px;
    height: 18px;
}

.search{
    display: flex;
    height: 19px;
    margin: 0 6px 0 2px;
    border: 1px solid #383838;
    border-radius: 10px;
}

.search button{
    gap: 3px;
    padding: 0 9px 0 4px;
}

.search button + button{
    padding: 0 5px;
    border-left: 1px solid #383838;
}

.toolbar > .icon-btn{
    padding: 0 4px 0 0;
}

.toolbar > .sep{
    margin: 0 3px;
}

.intervals{
    display: flex;
    gap: 1px;
}

.intervals button{
    height: 22px;
    padding: 0 3px;
    border-radius: 4px;
}

.intervals .selected, .tool-ico.selected{
    background: #383838;
}

.tool-btn{
    gap: 6px;
    padding: 0 6px;
}

.replay-btn{
    gap: 6px;
    height: 22px;
    padding: 0 5px;
    border-radius: 4px;
    background: #f4f4f4;
    color: #222;
    font-weight: 400;
}

.toolbar-right{
    display: flex;
    align-items: center;
    margin-left: auto;
    padding-right: 3px;
}

.layout-name{
    display: flex;
    flex-direction: column;
    align-items: center;
    margin: 0 8px 0 10px;
}

.layout-name a{
    font-size: 7px;
    line-height: 10px;
}

.letters{
    display: flex;
    gap: 4px;
    margin: 0 9px 0 6px;
}

.letters button{
    width: 15px;
    height: 15px;
    border: 1px solid #333;
    border-radius: 8px;
    font-size: 7px;
}

.letters .on{
    background: #fff;
    color: #111;
}

.tool-ico{
    width: 22px;
    height: 22px;
    margin-left: 3px;
    border-radius: 4px;
}

.pill{
    height: 19px;
    margin-left: 5px;
    padding: 0 7px;
    border-radius: 10px;
    background: #f4f4f4;
    color: #222;
}

.pill.dark{
    border: 1px solid #2c2c2c;
    background: #000;
    color: #fff;
}

/* workspace */
.workspace{
    display: flex;
    flex: 1;
    gap: 2px;
    min-height: 0;
    padding-top: 2px;
}

.left-rail, .right-rail{
    display: flex;
    flex-direction: column;
    align-items: center;
    width: 35px;
    padding-top: 5px;
    background: var(--bg);
    flex: none;
}

.left-rail button{
    width: 23px;
    height: 25px;
    border-radius: 4px;
}

.left-rail .selected{
    background: #333;
    background-clip: padding-box;
    border: 1px solid transparent;
    border-width: 1px 0;
}

.left-rail hr, .right-rail hr{
    width: 25px;
    height: 2px;
    margin: 4px 0;
    border: 0;
    background: #2c2c2c;
    flex: none;
}

.left-rail .star{
    height: 23px;
    margin: auto 0 12px;
    background: #f4f4f4;
    color: #222;
}

.right-rail{
    width: 31px;
    padding-top: 2px;
}

.right-rail button{
    position: relative;
    width: 31px;
    height: 30px;
}

.right-rail .lower{
    margin-top: auto;
}

.right-rail .badge{
    top: 2px;
    right: 2px;
}

.apps{
    width: 23px;
    height: 23px;
    fill: #111;
}

.apps circle{
    fill: #fff;
}

.center{
    display: flex;
    flex: 1;
    flex-direction: column;
    min-width: 0;
}

/* chart */
.chart{
    display: grid;
    flex: 1;
    grid-template-columns: 1fr 44px;
    grid-template-rows: 1fr 18px;
    min-height: 0;
    border-radius: 4px 4px 0 0;
    background: var(--chart);
    color: #fff;
    font-size: 8px;
}

.plot, .price-axis, .time-axis{
    position: relative;
    min-width: 0;
    min-height: 0;
}

.canvas{
    position: absolute;
    width: 100%;
    height: 100%;
}

.up{ fill: #2f64cf; }
.down{ fill: #050505; }
.wick{ opacity: 0.75; }

.last-line{
    stroke: #333;
    stroke-dasharray: 1 1;
}

.cross-h{
    stroke: #868992;
}

.cross-v{
    stroke: #666973;
    stroke-dasharray: 1 1;
}

.level{
    stroke: #fff;
}

.cursor-mark{
    fill: none;
    stroke: #fff;
}

.legend{
    position: absolute;
    top: 4px;
    left: 6px;
}

.legend h1{
    display: flex;
    align-items: center;
    gap: 3px;
    font-size: 10px;
    font-weight: 600;
    line-height: 14px;
}

.flag{
    width: 8px;
    height: 8px;
    margin: 0 5px 0 1px;
    background: #20e8f0;
}

.back{
    display: flex;
    padding: 2px;
    border-radius: 6px;
    background: var(--blue);
}

.orders{
    display: flex;
    gap: 5px;
    padding-top: 3px;
}

.orders > button{
    flex-direction: column;
    width: 48px;
    height: 23px;
    border-radius: 3px;
    font-weight: 700;
    line-height: 9px;
}

.orders > button span{
    font-size: 7px;
}

.sell{ background: var(--red); }
.buy{ background: var(--blue); }

.spread{
    display: flex;
    flex-direction: column;
    align-items: center;
    width: 16px;
    color: #333;
    font-weight: 400;
    line-height: 7px;
}

.spread small{
    font-size: 7px;
}

.spread button{
    width: 15px;
    height: 15px;
    border: 1px solid #d4d6dc;
    border-radius: 3px;
}

.draw-bar{
    position: absolute;
    top: 25px;
    left: 374px;
    display: flex;
    align-items: center;
    height: 25px;
    padding-right: 3px;
    border-radius: 4px;
    background: #1c1c1c;
    box-shadow: 0 1px 3px #0008;
    color: #ccc;
}

.draw-bar button{
    width: 25px;
    height: 25px;
}

.grip{
    width: 8px;
    height: 9px;
    margin: 0 4px 0 5px;
    background: radial-gradient(circle, #666 1px, transparent 1px) 0 0 / 4px 3px;
}

.tv-logo{
    position: absolute;
    bottom: 7px;
    left: 7px;
    width: 24px;
    height: 14px;
    fill: #000;
    stroke: #fff;
    stroke-width: 4;
    paint-order: stroke;
}

.nav-bar{
    position: absolute;
    bottom: 21px;
    left: 50%;
    display: flex;
    gap: 5px;
    transform: translateX(-46px);
}

.nav-bar button{
    width: 16px;
    height: 16px;
    border-radius: 3px;
    background: #2c2c2e;
    box-shadow: 0 1px 2px #0006;
}

.nav-bar .apart{
    margin-left: 6px;
}

.event{
    position: absolute;
    bottom: 2px;
    left: 1005px;
    width: 13px;
    height: 13px;
    border: 1px solid #e0224c;
    border-radius: 50%;
    background: linear-gradient(#4a86b8, #4a86b8) 1px 1px / 5px 5px no-repeat,
        repeating-linear-gradient(#fff 0 2px, #d8506c 2px 4px);
    box-shadow: inset 0 0 0 1px #fff;
}

.tag{
    position: absolute;
    right: 0;
    padding: 0 2px;
    background: #000;
    line-height: 12px;
}

.tag.max{
    top: 27px;
    background: #e3eaf8;
    color: #333846;
    font-weight: 400;
}

.tag.last{ top: 215px; }

.tag.cursor{
    top: 265px;
    padding: 1px;
    line-height: 12px;
}

.price-axis{
    display: flex;
    flex-direction: column;
    justify-content: space-between;
    padding: 3px 3px 0 2px;
    border-left: 1px solid #34363d;
}

.price-axis > span{
    padding-left: 3px;
    font-weight: 700;
}

.price-axis .currency{
    width: 38px;
    height: 17px;
    margin-bottom: -9px;
    padding-left: 3px;
    border: 0;
    border-radius: 3px;
    appearance: none;
    background: #fff url("data:image/svg+xml,%3Csvg xmlns='http://www.w3.org/2000/svg' viewBox='0 0 6 6'%3E%3Cpath d='M1 2l2 2 2-2' fill='none' stroke='%23222'/%3E%3C/svg%3E") right 2px center / 6px 6px no-repeat;
    color: #333;
    font: 400 8px "Open Sans", sans-serif;
    flex: none;
}

.price-axis .tag{
    right: 3px;
    left: 0;
    padding-left: 5px;
}

.price-axis .tag.max{
    font-weight: 600;
}

.time-axis{
    border-top: 1px solid #7d8089;
}

.time-axis text{
    fill: #fff;
    font-weight: 700;
    text-anchor: middle;
}

.time-tag{
    position: absolute;
    top: 0;
    left: 625px;
    display: flex;
    justify-content: space-between;
    width: 88px;
    padding: 2px 5px;
    background: #0c0c0c;
    font-weight: 400;
    white-space: nowrap;
}

.axis-settings{
    border-top: 1px solid #7d8089;
    border-left: 1px solid #34363d;
    color: #33353c;
}

/* bottom bars */
.replay-bar{
    display: grid;
    align-items: center;
    grid-template-columns: 1fr auto 1fr;
    height: 33px;
    background: var(--bg);
    flex: none;
}

.replay-controls{
    display: flex;
    align-items: center;
    grid-column: 2;
}

.replay-controls .sep{
    margin: 0 5px 0 9px;
}

.replay-controls .sep ~ .sep{
    margin: 0 3px;
}

.step-btn{
    width: 25px;
}

.step-btn.end{
    margin-left: 6px;
}

.close{
    justify-self: end;
    margin-right: 16px;
}

.range-bar{
    display: flex;
    align-items: center;
    gap: 7px;
    height: 25px;
    margin-top: 1px;
    padding: 0 7px 0 9px;
    background: var(--bg);
    flex: none;
}

.range-bar time{
    margin-left: auto;
}

.panel-bar{
    display: flex;
    align-items: center;
    height: 25px;
    margin-top: 3px;
    padding-right: 6px;
    background: #1e1e1e;
    flex: none;
}

.panel-bar > .icon-btn{
    margin-left: 10px;
}

.panel-tab{
    display: flex;
    align-items: center;
    gap: 4px;
    height: 100%;
    padding: 0 4px 0 5px;
    background: var(--bg);
}

.panel-tab button{
    height: 17px;
    margin-left: 2px;
    padding: 0 7px;
    border: 1px solid #3c3c3c;
    border-radius: 4px;
}

.replay-logo{
    position: relative;
    padding: 3px;
    border-radius: 4px;
    background: #f4f4f4;
    color: #111;
}

.replay-logo .ico{
    fill: #111;
}

.replay-logo::after{
    content: "";
    position: absolute;
    top: -1px;
    right: -1px;
    width: 4px;
    height: 4px;
    border-radius: 2px;
    background: #2b8c6c;
}

.panel-link{
    margin: 0 auto 0 9px;
}

/* taskbar */
.taskbar{
    display: grid;
    align-items: center;
    grid-template-columns: 1fr auto 1fr;
    height: 32px;
    border-top: 1px solid #383838;
    background: #1b1b1b;
    font-size: 8px;
    font-weight: 400;
    line-height: 10px;
    flex: none;
}

.weather{
    display: flex;
    gap: 2px;
    padding-left: 11px;
}

.weather svg{
    width: 20px;
    height: 18px;
}

.apps-row{
    display: flex;
    align-items: center;
}

.app{
    position: relative;
    width: 29px;
    height: 28px;
    border-radius: 4px;
}

.app > svg{
    width: 17px;
    height: 17px;
}

.app .badge{
    right: 2px;
    background: #dd6a6a;
    color: #311;
}

.app.open::after, .app.current::after{
    content: "";
    position: absolute;
    bottom: 1px;
    width: 4px;
    height: 2px;
    border-radius: 1px;
    background: #999;
}

.app.current{
    background: #2a2a2a;
}

.app.current::after{
    width: 10px;
    background: #e57373;
}

.task-search{
    display: flex;
    align-items: center;
    gap: 6px;
    width: 147px;
    height: 22px;
    margin: 0 2px;
    padding: 0 2px 0 7px;
    border-radius: 11px;
    background: #383838;
}

.task-search input{
    flex: 1;
    min-width: 0;
    border: 0;
    outline: 0;
    background: none;
    color: inherit;
    font: 400 9px "Open Sans", sans-serif;
}

.task-search input::placeholder{
    color: #bbb;
}

.rocks{
    width: 34px;
    height: 17px;
}

.tray{
    display: flex;
    align-items: center;
    justify-content: flex-end;
    gap: 5px;
    padding-right: 13px;
    color: #eee;
}

.tray-ico{
    width: 12px;
    height: 12px;
}

.tray-ico.cloud{
    margin-left: 5px;
}

.tray-ico.line, .tray-ico.mic{
    fill: none;
    stroke: #eee;
    stroke-width: 2;
}

.tray-ico.mic{
    stroke: #c98a78;
    margin: 0 5px;
}

.tray-ico.wide{
    width: 15px;
}

.lang{
    margin-right: 6px;
    text-align: center;
}

.clock{
    margin-left: 5px;
    text-align: right;
}
```
